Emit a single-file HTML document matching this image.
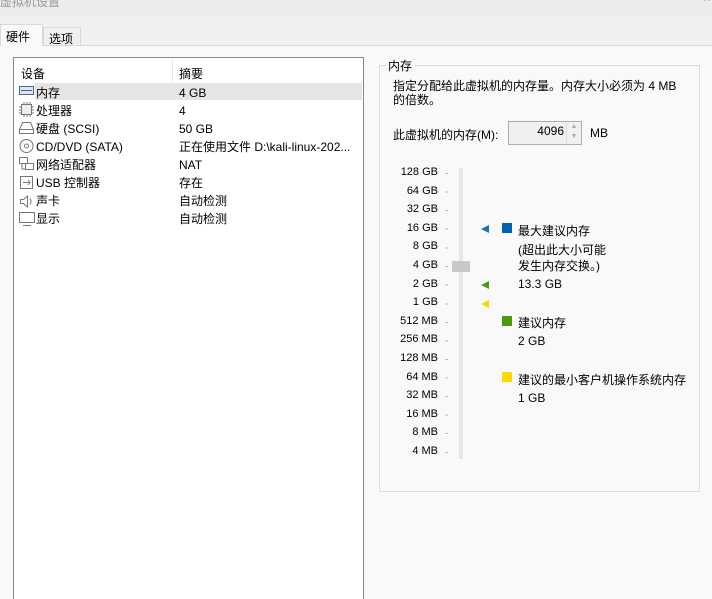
<!DOCTYPE html>
<html><head><meta charset="utf-8"><style>
*{margin:0;padding:0;box-sizing:border-box}
html,body{width:712px;height:599px;overflow:hidden}
body{background:#f0f0f0;font-family:"Liberation Sans","Noto Sans CJK SC",sans-serif;font-size:12px;color:#000;position:relative}
.a{position:absolute;white-space:nowrap}
.sc{position:absolute;right:0;width:60px;text-align:right;font-size:11px}
</style></head><body>
<div class="a" style="left:0;top:0;width:712px;height:16px;background:#ececec"></div>
<div class="a" style="left:0;top:-7px;color:#999;font-size:12px">虚拟机设置</div>
<div class="a" style="right:2px;top:-6px;color:#999">^</div>
<div class="a" style="left:0;top:24px;width:43px;height:22px;background:#f9f9f9;border:1px solid #d9d9d9;border-bottom:none;z-index:2"></div>
<div class="a" style="left:6px;top:28px;z-index:3">硬件</div>
<div class="a" style="left:43px;top:27px;width:38px;height:18px;background:#f0f0f0;border:1px solid #d9d9d9;border-bottom:none"></div>
<div class="a" style="left:49px;top:30px">选项</div>
<div class="a" style="left:0;top:45px;width:712px;height:554px;background:#f9f9f9;border-top:1px solid #d9d9d9"></div>
<div class="a" style="left:13px;top:57px;width:351px;height:560px;background:#fff;border:1px solid #828790"></div>
<div class="a" style="left:172px;top:60px;width:1px;height:22px;background:#e5e5e5"></div>
<div class="a" style="left:21px;top:65px">设备</div>
<div class="a" style="left:179px;top:65px">摘要</div>
<div class="a" style="left:35px;top:83px;width:327px;height:17px;background:#e5e5e5"></div>
<div class="a" style="left:36px;top:84px;line-height:18px">内存<br>处理器<br>硬盘 (SCSI)<br>CD/DVD (SATA)<br>网络适配器<br>USB 控制器<br>声卡<br>显示</div>
<div class="a" style="left:179px;top:84px;line-height:18px">4 GB<br>4<br>50 GB<br>正在使用文件 D:\kali-linux-202...<br>NAT<br>存在<br>自动检测<br>自动检测</div>
<svg class="a" style="left:18px;top:84px" width="18" height="146" fill="none" stroke="#707880" stroke-width="1">
<rect x="1.5" y="2.5" width="14" height="8" fill="#dde6ef" stroke="#4a6a8a"/><line x1="3" y1="6.5" x2="14" y2="6.5" stroke="#4a6a8a"/>
<rect x="3.5" y="20.5" width="10" height="10" fill="#eee"/><path d="M1 23h2M1 26h2M1 29h2M14 23h2M14 26h2M14 29h2M6 18v2M9 18v2M12 18v2M6 31v2M9 31v2M12 31v2"/>
<path d="M1.5 45.5l3-7h8l3 7v4h-14z"/><line x1="1.5" y1="45.5" x2="15.5" y2="45.5"/>
<circle cx="8.5" cy="62" r="6.5"/><circle cx="8.5" cy="62" r="2"/>
<rect x="1.5" y="73.5" width="8" height="6"/><rect x="7.5" y="79.5" width="8" height="6"/><path d="M4 80v5h3"/>
<rect x="2.5" y="92.5" width="12" height="12"/><path d="M5 98.5h7M10 96l2 2.5-2 2.5"/>
<path d="M2.5 115.5h3l4-3.5v11l-4-3.5h-3z M12 114.5q2 3 0 6"/>
<rect x="1.5" y="128.5" width="15" height="10"/><path d="M5 141.5h8"/>
</svg>
<div class="a" style="left:379px;top:65px;width:321px;height:427px;border:1px solid #dcdcdc"></div>
<div class="a" style="left:386px;top:57px;background:#f9f9f9;padding:0 2px">内存</div>
<div class="a" style="left:393px;top:79px;line-height:14px">指定分配给此虚拟机的内存量。内存大小必须为 4 MB<br>的倍数。</div>
<div class="a" style="left:393px;top:126px">此虚拟机的内存(M):</div>
<div class="a" style="left:508px;top:121px;width:74px;height:24px;background:#f0f0f0;border:1px solid #adadad"></div>
<div class="a" style="left:530px;top:124px;width:34px;text-align:right">4096</div>
<div class="a" style="left:566px;top:122px;width:15px;height:22px;border-left:1px solid #ddd;color:#aaa;font-size:7px;line-height:10px;text-align:center">▲<br>▼</div>
<div class="a" style="left:590px;top:126px">MB</div>
<div class="a" style="left:459px;top:168px;width:4px;height:291px;background:#e6e6e6"></div>
<div class="a" style="left:452px;top:261px;width:18px;height:11px;background:#c8c8c8"></div>
<div class="a" style="left:377px;top:166px;width:61px;height:300px">
<div class="sc" style="top:0">128 GB</div><div class="sc" style="top:18.6px">64 GB</div><div class="sc" style="top:37.2px">32 GB</div><div class="sc" style="top:55.8px">16 GB</div><div class="sc" style="top:74.4px">8 GB</div><div class="sc" style="top:93px">4 GB</div><div class="sc" style="top:111.6px">2 GB</div><div class="sc" style="top:130.2px">1 GB</div><div class="sc" style="top:148.8px">512 MB</div><div class="sc" style="top:167.4px">256 MB</div><div class="sc" style="top:186px">128 MB</div><div class="sc" style="top:204.6px">64 MB</div><div class="sc" style="top:223.2px">32 MB</div><div class="sc" style="top:241.8px">16 MB</div><div class="sc" style="top:260.4px">8 MB</div><div class="sc" style="top:279px">4 MB</div>
</div>
<svg class="a" style="left:444px;top:168px" width="50" height="295">
<g stroke="#bbb"><path d="M1 5.5h3M1 24h3M1 42.5h3M1 61h3M1 80h3M1 98.5h3M1 117h3M1 136h3M1 154.5h3M1 173h3M1 191.5h3M1 210h3M1 228.5h3M1 247h3M1 265.5h3M1 284.5h3"/></g>
<path d="M37 61l8-4v8z" fill="#1f6fb5"/><path d="M37 117l8-4v8z" fill="#4a9a1a"/><path d="M37 136l8-4v8z" fill="#ffd800"/>
</svg>
<div class="a" style="left:502px;top:223px;width:10px;height:10px;background:#0063b1"></div>
<div class="a" style="left:518px;top:222px">最大建议内存</div>
<div class="a" style="left:518px;top:242px;line-height:16px">(超出此大小可能<br>发生内存交换。)</div>
<div class="a" style="left:518px;top:277px">13.3 GB</div>
<div class="a" style="left:502px;top:316px;width:10px;height:10px;background:#4a9a10"></div>
<div class="a" style="left:518px;top:314px">建议内存</div>
<div class="a" style="left:518px;top:334px">2 GB</div>
<div class="a" style="left:502px;top:372px;width:10px;height:10px;background:#ffd800"></div>
<div class="a" style="left:518px;top:371px">建议的最小客户机操作系统内存</div>
<div class="a" style="left:518px;top:391px">1 GB</div>
</body></html>
